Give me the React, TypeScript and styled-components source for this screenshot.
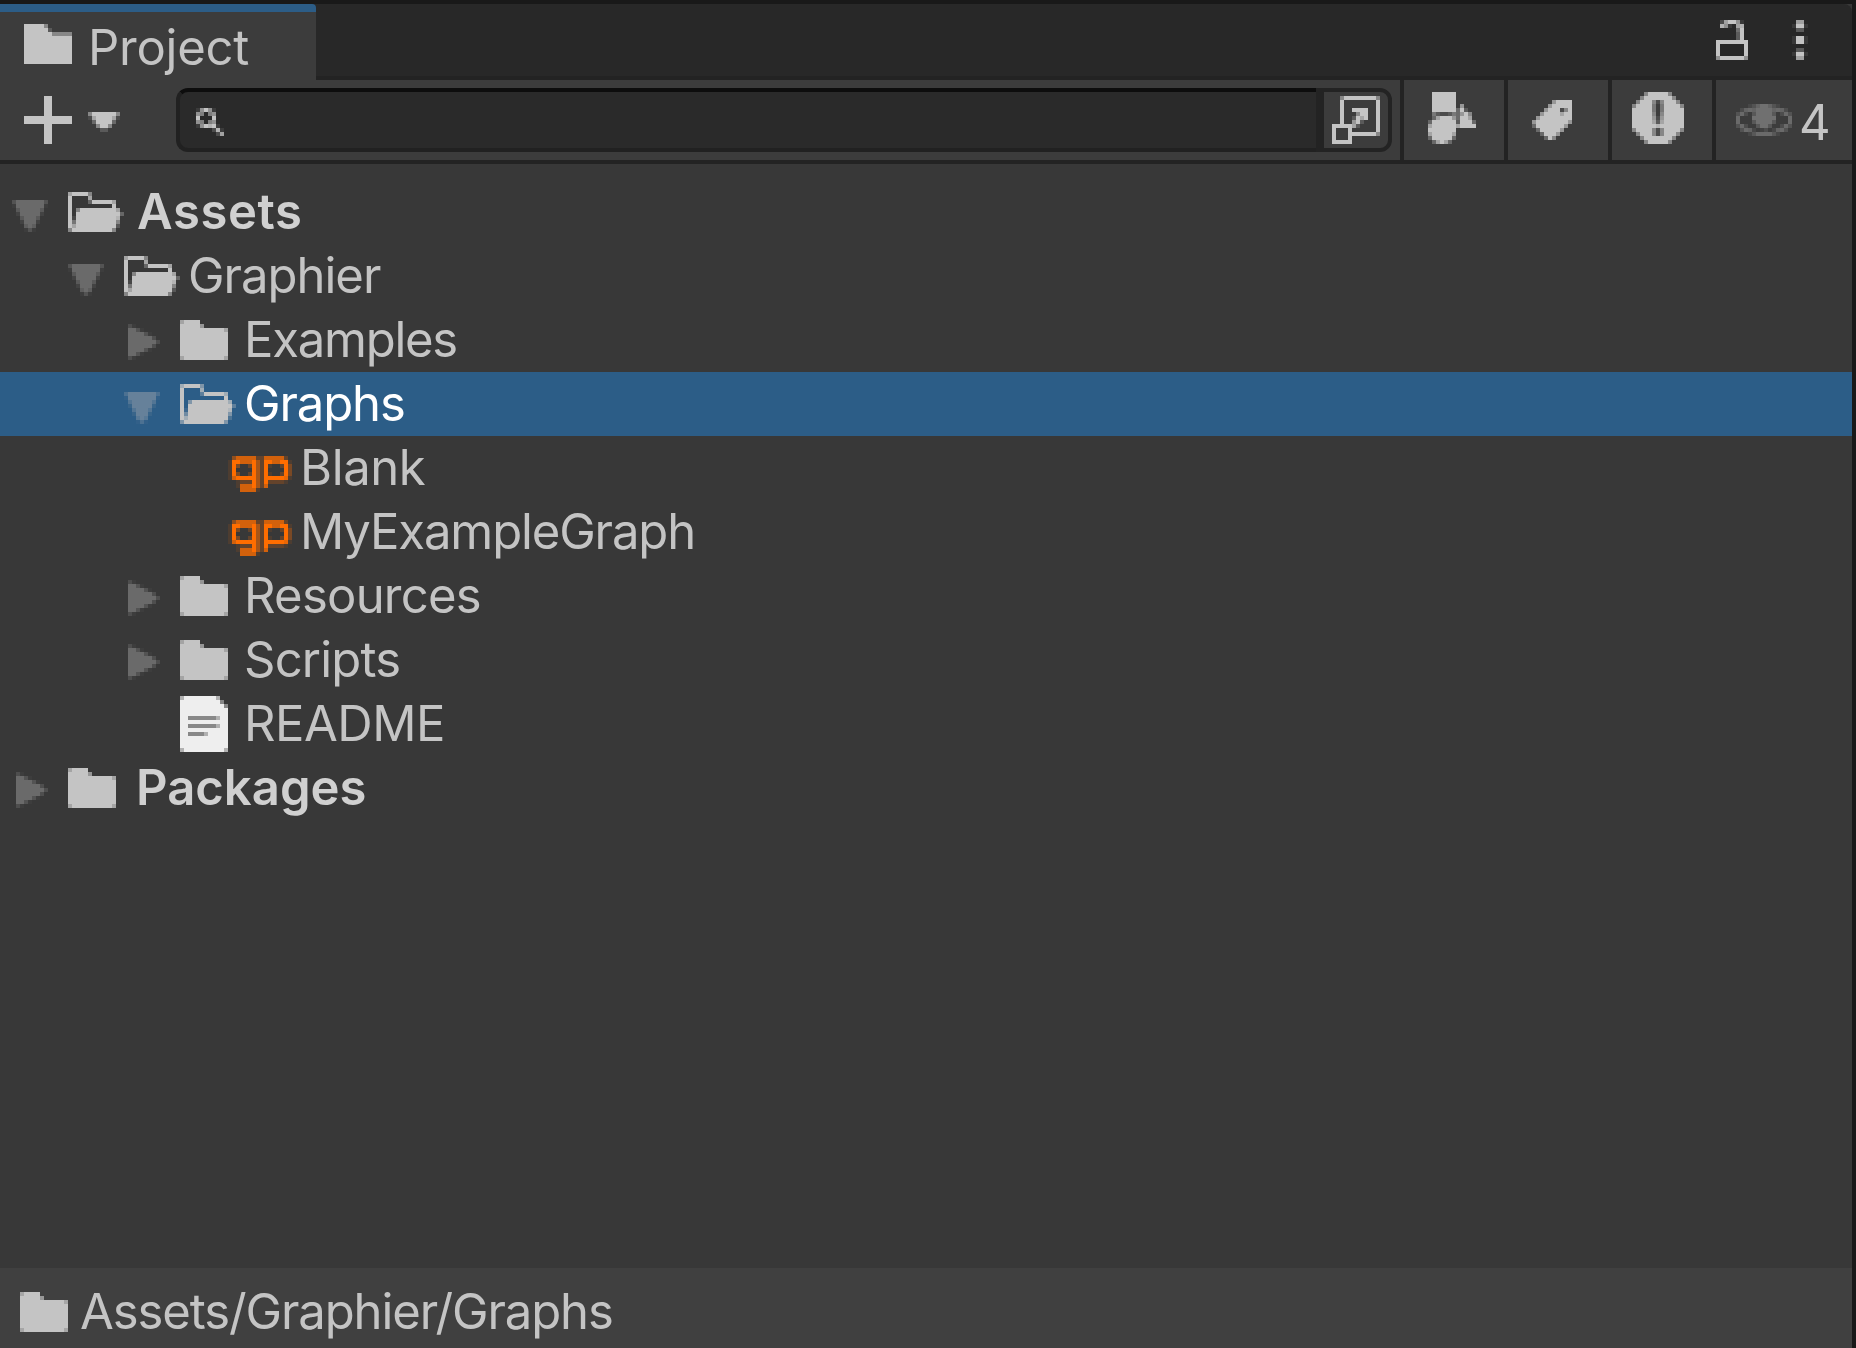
import React from 'react';
import styled, { createGlobalStyle } from 'styled-components';

const GlobalStyle = createGlobalStyle`
  * { box-sizing: border-box; }
  html, body { margin: 0; padding: 0; background: #191919; overflow: hidden; }
`;

const CELL = 4;

/* Icons are pixel art: every character is one cell, 1-9 being its coverage. */
const ICONS = {
  tabFolder: [
    '999995000000', '999999200000', '999999955555', '999999999999', '999999999999',
    '999999999999', '999999999999', '999999999999', '999999999999', '999999999999',
  ],
  folder: [
    '799990000000', '999996000000', '999999999997', '999999999999', '999999999999',
    '999999999999', '999999999999', '999999999999', '999999999999', '799999999997',
  ],
  folderOpen: [
    '79999500000000', '90000700000000', '90000399999700', '90000000000900', '90599999999970',
    '90999999999993', '91999999999980', '94999999999950', '97999999999920', '59999999999500',
  ],
  doc: [
    '699999999600', '999999999940', '999999999994', '999999999999', '999999999999',
    '994444444699', '999999999999', '994444444699', '999999999999', '994444699999',
    '999999999999', '999999999999', '999999999999', '699999999996',
  ],
  down: [
    '599999995', '199999991', '069999960', '029999920', '006999600', '002999200', '000797000', '000151000',
  ],
  right: [
    '41000000', '99510000', '99995100', '99999940', '99999994', '99999940', '99995100', '99510000', '41000000',
  ],
  plus: [
    '000009900000', '000009900000', '000009900000', '000009900000', '000009900000', '999999999999',
    '999999999999', '000009900000', '000009900000', '000009900000', '000009900000', '000009900000',
  ],
  caret: ['59999995', '17999971', '03999930', '00599500', '00022000'],
  search: ['1696100', '6505600', '9000900', '6505600', '1698910', '0000281', '0000027'],
  popout: [
    '005999999995', '009000000009', '009000000009', '009009999009', '009000599009', '009002979009',
    '009006920009', '999997200009', '900090000009', '900099999995', '900090000000', '999990000000',
  ],
  shapes: [
    '099999900000', '099999900000', '099999900000', '099999906000', '099999939200', '042112436950',
    '037999639970', '399999929993', '799999979999', '999999900000', '799999700000', '399999300000', '037973000000',
  ],
  tag: [
    '0000069999', '0000699999', '0006999159', '0069999799', '0699999999',
    '6999999996', '3999999960', '0399999600', '0039996000', '0003950000',
  ],
  alert: [
    '0005999995000', '0059999999500', '0599951599950', '5999940499995', '9999940499999',
    '9999950599999', '9999961699999', '9999972799999', '9999998999999', '5999951599995',
    '0599951599950', '0059999999500', '0005999995000',
  ],
  eye: [
    '00024799742000', '03787999978730', '48305999950384', '80009999990008',
    '80005999950008', '48300599500384', '04872013027840', '00025888852000',
  ],
  lock: [
    '02799610', '08610780', '00000490', '00000390', '00000390',
    '99999999', '90000009', '90000009', '90000009', '69999996',
  ],
  kebab: ['0770', '1991', '0330', '0000', '1991', '1991', '0000', '0330', '1991', '0770'],
  graph: [
    '0477777227777720', '1997779529977991', '1930029529100293', '1900009529000093', '1930029529100293',
    '1799999529999981', '0012229529222210', '0017779527000000', '0007777100000000',
  ],
};

type IconName = keyof typeof ICONS;

function PixelIcon({ name }: { name: IconName }) {
  const rows = ICONS[name];
  const cols = rows[0].length;
  const runs: React.ReactNode[] = [];
  rows.forEach((row, y) => {
    for (let x = 0; x < cols; ) {
      let end = x + 1;
      while (end < cols && row[end] === row[x]) end += 1;
      if (row[x] !== '0') {
        runs.push(<rect key={`${x}-${y}`} x={x} y={y} width={end - x} height={1} opacity={Number(row[x]) / 9} />);
      }
      x = end;
    }
  });
  return (
    <svg width={cols * CELL} height={rows.length * CELL} viewBox={`0 0 ${cols} ${rows.length}`}
      fill="currentColor" shapeRendering="crispEdges" aria-hidden>
      {runs}
    </svg>
  );
}

const Panel = styled.div`
  width: 1856px;
  height: 1348px;
  display: flex;
  flex-direction: column;
  border-top: 4px solid #191919;
  border-right: 4px solid #191919;
  background: #383838;
  color: #c4c4c4;
  font: 400 49px/64px Inter, 'Liberation Sans', sans-serif;
  svg { display: block; flex: none; }
`;

const TabBar = styled.header`
  display: flex;
  height: 76px;
  flex: none;
  background: #282828;
  border-top-right-radius: 8px;
`;

const Tab = styled.div`
  width: 316px;
  display: flex;
  align-items: flex-start;
  gap: 16px;
  padding: 12px 0 0 24px;
  background: #3c3c3c;
  border-top: 8px solid #2c5d87;
  border-top-right-radius: 4px;
`;

const TabTools = styled.div`
  flex: 1;
  display: flex;
  justify-content: flex-end;
  gap: 44px;
  padding: 16px 44px 0 0;
  border-bottom: 4px solid #232323;
`;

const Label = styled.span<{ $spacing?: number; $bold?: boolean; $shift?: number }>`
  letter-spacing: ${p => p.$spacing ?? 0}px;
  font-weight: ${p => (p.$bold ? 600 : 400)};
  margin-left: ${p => p.$shift ?? 0}px;
  white-space: nowrap;
`;

const TabLabel = styled(Label)`
  margin-top: -8px;
`;

const Toolbar = styled.div`
  display: flex;
  height: 84px;
  flex: none;
  background: #3c3c3c;
  border-bottom: 4px solid #232323;
`;

const CreateButton = styled.div`
  width: 176px;
  display: flex;
  align-items: flex-start;
  gap: 16px;
  padding: 16px 0 0 24px;
`;

const CaretSlot = styled.span`
  padding-top: 16px;
`;

const SearchField = styled.div`
  width: 1216px;
  height: 64px;
  margin: 8px 8px 0 0;
  display: flex;
`;

const SearchInput = styled.div`
  flex: 1;
  padding: 16px 0 0 16px;
  background: #2a2a2a;
  border: 4px solid #212121;
  border-top-color: #0d0d0d;
  border-right: 0;
  border-radius: 12px 0 0 12px;
`;

const PickerButton = styled.div`
  width: 76px;
  padding: 4px 0 0 8px;
  background: #3c3c3c;
  border: 4px solid #232323;
  border-left-width: 8px;
  border-radius: 0 12px 12px 0;
`;

const ToolButton = styled.div<{ $width: number; $left: number; $top: number }>`
  width: ${p => p.$width}px;
  padding: ${p => p.$top}px 0 0 ${p => p.$left}px;
  display: flex;
  align-items: flex-start;
  border-left: 4px solid #232323;
`;

const Dimmed = styled.span`
  color: #707070;
`;

const Count = styled.span`
  margin: -13px 0 0 7px;
`;

const Tree = styled.main`
  flex: 1;
  padding-top: 16px;
`;

const Row = styled.div<{ $depth: number; $selected?: boolean }>`
  height: 64px;
  display: flex;
  padding-left: ${p => 12 + p.$depth * 56}px;
  background: ${p => (p.$selected ? '#2c5d87' : 'transparent')};
`;

const Arrow = styled.span<{ $open?: boolean; $selected?: boolean }>`
  width: 56px;
  padding: ${p => (p.$open ? '20px 0 0 0' : '16px 0 0 4px')};
  color: ${p => (p.$selected ? '#66819a' : '#6a6a6a')};
`;

const IconSlot = styled.span<{ $kind: IconName }>`
  width: 64px;
  padding-top: ${p => (p.$kind === 'doc' ? 4 : p.$kind === 'graph' ? 20 : 12)}px;
  margin-left: ${p => (p.$kind === 'graph' ? -8 : 0)}px;
  margin-right: ${p => (p.$kind === 'graph' ? 8 : 0)}px;
  color: ${p => (p.$kind === 'doc' ? '#eeeeee' : p.$kind === 'graph' ? '#ff6d00' : '#c4c4c4')};
`;

const RowLabel = styled(Label)<{ $selected?: boolean }>`
  color: ${p => (p.$selected ? '#ffffff' : p.$bold ? '#d0d0d0' : '#c4c4c4')};
`;

const Footer = styled.footer`
  height: 80px;
  flex: none;
  display: flex;
  gap: 12px;
  padding: 24px 0 0 20px;
  background: #404040;
`;

const Path = styled(Label)`
  margin-top: -12px;
`;

interface Item {
  name: string;
  depth: number;
  icon: IconName;
  open?: boolean;
  selected?: boolean;
  bold?: boolean;
  spacing?: number;
  shift?: number;
}

const items: Item[] = [
  { name: 'Assets', depth: 0, icon: 'folderOpen', open: true, bold: true, shift: 5, spacing: 0.6 },
  { name: 'Graphier', depth: 1, icon: 'folderOpen', open: true, spacing: -1 },
  { name: 'Examples', depth: 2, icon: 'folder', open: false, spacing: -1.25 },
  { name: 'Graphs', depth: 2, icon: 'folderOpen', open: true, selected: true, spacing: -1.1 },
  { name: 'Blank', depth: 3, icon: 'graph', spacing: -0.4 },
  { name: 'MyExampleGraph', depth: 3, icon: 'graph', spacing: -1.13 },
  { name: 'Resources', depth: 2, icon: 'folder', open: false, spacing: -0.75 },
  { name: 'Scripts', depth: 2, icon: 'folder', open: false, spacing: -0.8 },
  { name: 'README', depth: 2, icon: 'doc', spacing: -0.5 },
  { name: 'Packages', depth: 0, icon: 'folder', open: false, bold: true, shift: 4, spacing: 0 },
];

export default function App() {
  return (
    <Panel>
      <GlobalStyle />
      <TabBar>
        <Tab>
          <PixelIcon name="tabFolder" />
          <TabLabel $spacing={-0.25}>Project</TabLabel>
        </Tab>
        <TabTools>
          <PixelIcon name="lock" />
          <PixelIcon name="kebab" />
        </TabTools>
      </TabBar>
      <Toolbar>
        <CreateButton>
          <PixelIcon name="plus" />
          <CaretSlot><PixelIcon name="caret" /></CaretSlot>
        </CreateButton>
        <SearchField>
          <SearchInput><PixelIcon name="search" /></SearchInput>
          <PickerButton><PixelIcon name="popout" /></PickerButton>
        </SearchField>
        <ToolButton $width={104} $left={24} $top={12}><PixelIcon name="shapes" /></ToolButton>
        <ToolButton $width={104} $left={24} $top={20}><PixelIcon name="tag" /></ToolButton>
        <ToolButton $width={104} $left={20} $top={12}><PixelIcon name="alert" /></ToolButton>
        <ToolButton $width={140} $left={20} $top={24}>
          <Dimmed><PixelIcon name="eye" /></Dimmed>
          <Count>4</Count>
        </ToolButton>
      </Toolbar>
      <Tree>
        {items.map(it => (
          <Row key={it.name} $depth={it.depth} $selected={it.selected}>
            <Arrow $open={it.open} $selected={it.selected}>
              {it.open !== undefined && <PixelIcon name={it.open ? 'down' : 'right'} />}
            </Arrow>
            <IconSlot $kind={it.icon}><PixelIcon name={it.icon} /></IconSlot>
            <RowLabel $bold={it.bold} $selected={it.selected} $spacing={it.spacing} $shift={it.shift}>
              {it.name}
            </RowLabel>
          </Row>
        ))}
      </Tree>
      <Footer>
        <PixelIcon name="folder" />
        <Path $spacing={-1.1}>Assets/Graphier/Graphs</Path>
      </Footer>
    </Panel>
  );
}
